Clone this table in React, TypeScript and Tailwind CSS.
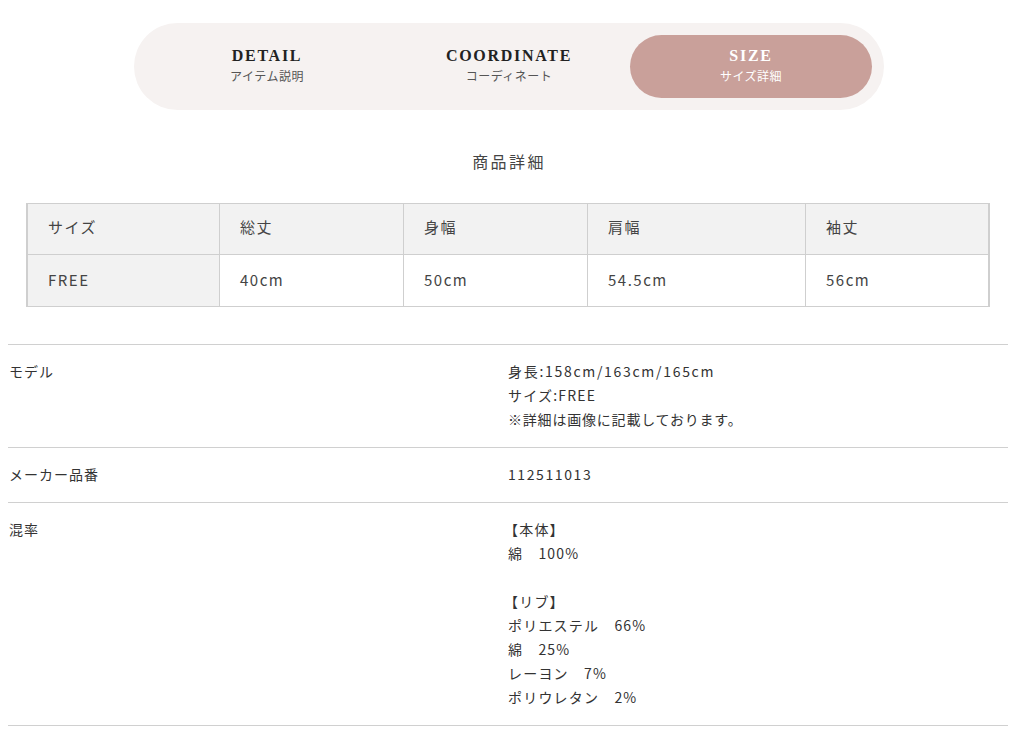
import React from "react";

const jp = '"Noto Sans CJK JP", "Noto Sans", sans-serif';
const serif = '"Liberation Serif", "Noto Sans CJK JP", serif';

const tabs = [
  { en: "DETAIL", ja: "アイテム説明", active: false },
  { en: "COORDINATE", ja: "コーディネート", active: false },
  { en: "SIZE", ja: "サイズ詳細", active: true },
];

const headers = ["サイズ", "総丈", "身幅", "肩幅", "袖丈"];
const values = ["FREE", "40cm", "50cm", "54.5cm", "56cm"];
const widths = ["w-[192px]", "w-[184px]", "w-[184px]", "w-[218px]", "flex-1"];

export default function App() {
  return (
    <div className="w-[1010px] h-[729px] bg-white overflow-hidden text-[#333]" style={{ fontFamily: jp }}>
      <div className="pt-[23px] flex justify-center">
        <div className="w-[750px] h-[87px] ml-[8px] rounded-full bg-[#f6f2f1] p-[12px] flex">
          {tabs.map((t) => (
            <div
              key={t.en}
              className={
                "flex-1 rounded-full flex flex-col items-center justify-center pb-[2px] " +
                (t.active ? "bg-[#c9a09a] text-white" : "text-[#222]")
              }
            >
              <div
                className="text-[16px] font-bold leading-[20px] tracking-[1.7px]"
                style={{ fontFamily: serif }}
              >
                {t.en}
              </div>
              <div
                className={
                  "text-[12px] leading-[18px] tracking-[0.5px] mt-[1px] " +
                  (t.active ? "text-white" : "text-[#555]")
                }
                style={{ fontFamily: jp }}
              >
                {t.ja}
              </div>
            </div>
          ))}
        </div>
      </div>

      <div className="mt-[39px] pl-[8px] text-center text-[16px] leading-[24px] tracking-[2.4px] text-[#444]">商品詳細</div>

      <div className="mt-[30px] mx-[26px] w-[964px] border-y border-l-2 border-r-2 border-[#cfcfcf]">
        <div className="flex h-[51px] bg-[#f2f2f2] border-b border-[#cfcfcf]">
          {headers.map((h, i) => (
            <div
              key={h}
              className={
                widths[i] +
                " flex items-center pl-[20px] pb-[3px] text-[15px] tracking-[1.5px] text-[#444] " +
                (i < 4 ? "border-r border-[#cfcfcf]" : "")
              }
            >
              {h}
            </div>
          ))}
        </div>
        <div className="flex h-[51px]">
          {values.map((v, i) => (
            <div
              key={v}
              className={
                widths[i] +
                " flex items-center pl-[20px] text-[15px] tracking-[1.5px] text-[#444] " +
                (i === 0 ? "bg-[#f2f2f2] " : "bg-white ") +
                (i < 4 ? "border-r border-[#cfcfcf]" : "")
              }
            >
              {v}
            </div>
          ))}
        </div>
      </div>

      <div className="mt-[37px] ml-[8px] w-[1000px] text-[14px] leading-[24px] tracking-[1px] text-[#333]">
        <div className="flex border-t border-[#d0d0d0] pt-[14px] pb-[16px]">
          <div className="w-[500px] pl-[1px]">モデル</div>
          <div className="flex-1">
            <div className="tracking-[1.7px]">身長:158cm/163cm/165cm</div>
            <div className="tracking-[1.2px]">サイズ:FREE</div>
            <div className="tracking-[0.8px]">※詳細は画像に記載しております。</div>
          </div>
        </div>
        <div className="flex border-t border-[#d0d0d0] pt-[14px] pb-[16px]">
          <div className="w-[500px] pl-[1px]">メーカー品番</div>
          <div className="flex-1 tracking-[1.6px]">112511013</div>
        </div>
        <div className="flex border-t border-b border-[#d0d0d0] pt-[14px] pb-[16px]">
          <div className="w-[500px] pl-[1px]">混率</div>
          <div className="flex-1 tracking-[1.2px]">
            <div className="-ml-[4px]">【本体】</div>
            <div>綿　100%</div>
            <div>&nbsp;</div>
            <div className="-ml-[4px]">【リブ】</div>
            <div>ポリエステル　66%</div>
            <div>綿　25%</div>
            <div>レーヨン　7%</div>
            <div>ポリウレタン　2%</div>
          </div>
        </div>
      </div>
    </div>
  );
}
